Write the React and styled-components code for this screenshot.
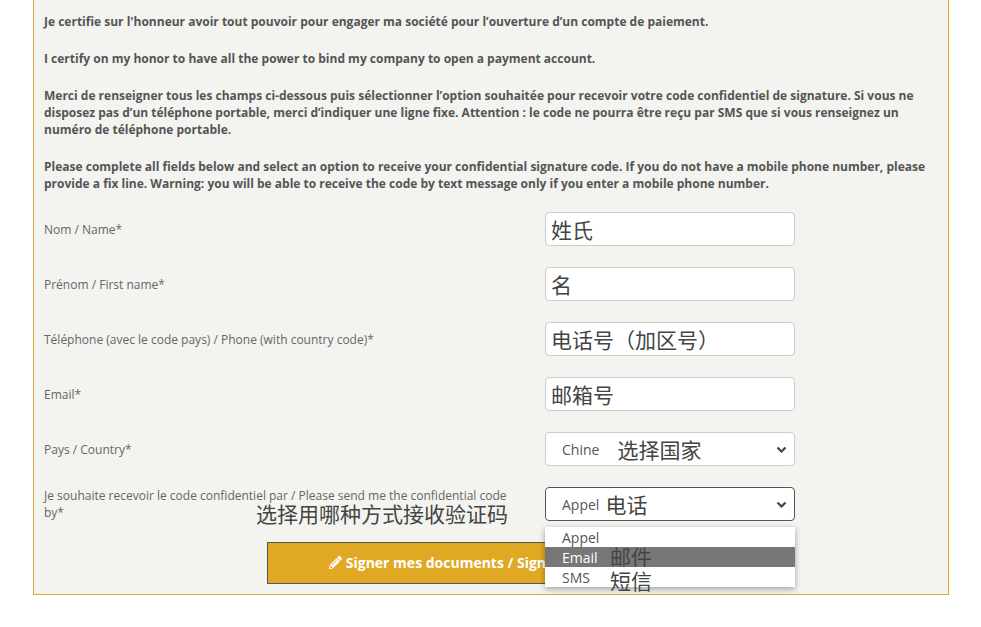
import React from "react";
import styled, { createGlobalStyle } from "styled-components";
import { FaPencilAlt } from "react-icons/fa";

const GlobalStyle = createGlobalStyle`
  body {
    margin: 0;
    background: #ffffff;
    font-family: "Open Sans", "Noto Sans CJK SC", sans-serif;
  }
`;

const CJK = `"Noto Sans CJK SC", "Noto Sans", sans-serif`;

const Panel = styled.div`
  margin-left: 33px;
  background: #f3f3ef;
  border: 1px solid #e6a823;
  border-left-color: #dca63a;
  border-top: none;
  padding: 13px 10px 10px 10px;
  box-sizing: content-box;
  width: 894px;
`;

const Para = styled.p`
  margin: 0 0 20px 0;
  font-size: 12px;
  line-height: 17px;
  font-weight: 700;
  color: #555;
`;

const Form = styled.div`
  display: flex;
  flex-direction: column;
  gap: 21px;
`;

const Row = styled.div`
  position: relative;
  display: flex;
  align-items: center;
`;

const Label = styled.label`
  width: 470px;
  margin-right: 31px;
  font-size: 12px;
  line-height: 17px;
  color: #666;
`;

const Input = styled.div`
  width: 250px;
  height: 34px;
  box-sizing: border-box;
  background: #fff;
  border: 1px solid ${p => (p.$focus ? "#555" : "#ccc")};
  border-radius: 4px;
  display: flex;
  align-items: center;
  padding: 0 5px;
  font-family: ${CJK};
  font-size: 21px;
  color: #444;
`;

const Select = styled(Input)`
  padding: 0 7px 0 16px;
`;

const OptText = styled.span`
  font-family: "Open Sans", sans-serif;
  font-size: 14px;
  color: #555;
`;

const Note = styled.span`
  font-family: ${CJK};
  font-size: 21px;
  color: #444;
  margin-left: ${p => p.$gap}px;
`;

const Chevron = styled.svg`
  margin-left: auto;
`;

const Overlay = styled.span`
  position: absolute;
  left: ${p => p.$left}px;
  top: ${p => p.$top}px;
  font-family: ${CJK};
  font-size: 21px;
  line-height: 21px;
  color: #444;
  white-space: nowrap;
`;

const Dropdown = styled.div`
  position: absolute;
  left: 501px;
  top: 40px;
  width: 250px;
  background: #fff;
  box-shadow: 0 2px 6px rgba(0, 0, 0, 0.35);
  z-index: 2;
`;

const Option = styled.div`
  position: relative;
  height: 20px;
  display: flex;
  align-items: center;
  padding-left: 17px;
  font-size: 14px;
  color: ${p => (p.$active ? "#fff" : "#555")};
  background: ${p => (p.$active ? "#777" : "#fff")};
`;

const OptNote = styled.span`
  position: absolute;
  left: 65px;
  top: ${p => p.$top}px;
  font-family: ${CJK};
  font-size: 21px;
  line-height: 21px;
  color: #444;
  white-space: nowrap;
`;

const ButtonRow = styled.div`
  display: flex;
  justify-content: center;
`;

const Button = styled.button`
  width: 449px;
  height: 42px;
  padding-bottom: 2px;
  background: #e1a823;
  border: 1px solid #555;
  color: #fff;
  font-family: "Open Sans", sans-serif;
  font-weight: 700;
  font-size: 14px;
  display: flex;
  align-items: center;
  justify-content: center;
  gap: 4px;
`;

const fields = [
  { label: "Nom / Name*", value: "姓氏" },
  { label: "Prénom / First name*", value: "名" },
  { label: "Téléphone (avec le code pays) / Phone (with country code)*", value: "电话号（加区号）" },
  { label: "Email*", value: "邮箱号" },
];

const Arrow = () => (
  <Chevron width="11" height="7" viewBox="0 0 11 7">
    <polyline points="1.5,1.5 5.5,5.5 9.5,1.5" fill="none" stroke="#444" strokeWidth="2.2" />
  </Chevron>
);

export default function App() {
  return (
    <>
      <GlobalStyle />
      <Panel>
        <Para>Je certifie sur l'honneur avoir tout pouvoir pour engager ma société pour l’ouverture d’un compte de paiement.</Para>
        <Para>I certify on my honor to have all the power to bind my company to open a payment account.</Para>
        <Para>
          Merci de renseigner tous les champs ci-dessous puis sélectionner l’option souhaitée pour recevoir votre code confidentiel de signature. Si vous ne disposez pas d’un téléphone portable, merci d’indiquer une ligne fixe. Attention : le code ne pourra être reçu par SMS que si vous renseignez un numéro de téléphone portable.
        </Para>
        <Para>
          Please complete all fields below and select an option to receive your confidential signature code. If you do not have a mobile phone number, please provide a fix line. Warning: you will be able to receive the code by text message only if you enter a mobile phone number.
        </Para>
        <Form>
          {fields.map(f => (
            <Row key={f.label}>
              <Label>{f.label}</Label>
              <Input>{f.value}</Input>
            </Row>
          ))}
          <Row>
            <Label>Pays / Country*</Label>
            <Select>
              <OptText>Chine</OptText>
              <Note $gap={18}>选择国家</Note>
              <Arrow />
            </Select>
          </Row>
          <Row>
            <Label>Je souhaite recevoir le code confidentiel par / Please send me the confidential code by*</Label>
            <Select $focus>
              <OptText>Appel</OptText>
              <Note $gap={6}>电话</Note>
              <Arrow />
            </Select>
            <Overlay $left={212} $top={16}>选择用哪种方式接收验证码</Overlay>
            <Dropdown>
              <Option>Appel</Option>
              <Option $active>
                Email
                <OptNote $top={-1}>邮件</OptNote>
              </Option>
              <Option>
                SMS
                <OptNote $top={3}>短信</OptNote>
              </Option>
            </Dropdown>
          </Row>
          <ButtonRow>
            <Button>
              <FaPencilAlt size={13} />
              Signer mes documents / Sign my documents
            </Button>
          </ButtonRow>
        </Form>
      </Panel>
    </>
  );
}
